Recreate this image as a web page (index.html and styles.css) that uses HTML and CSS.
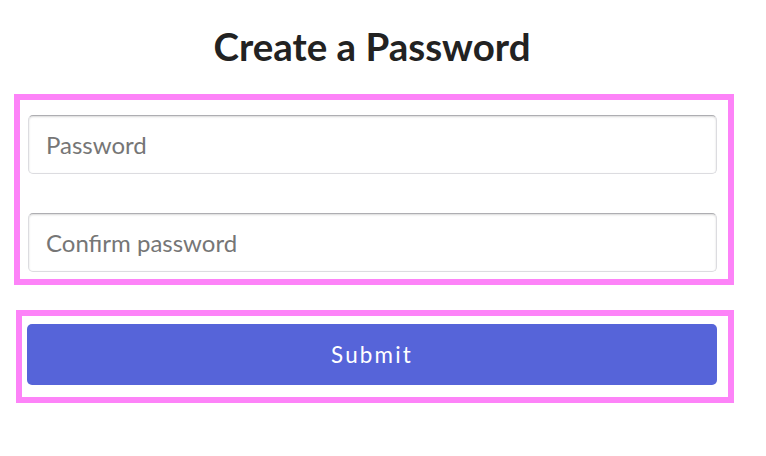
FILE: index.html
```html
<!DOCTYPE html>
<html lang="en">
<head>
<meta charset="utf-8">
<title>Create a Password</title>
<link rel="stylesheet" href="styles.css">
</head>
<body>
<div class="page">
  <h1 class="title">Create a Password</h1>
  <div class="fields">
    <input class="field" type="password" placeholder="Password">
    <input class="field" type="password" placeholder="Confirm password">
  </div>
  <div class="actions">
    <button class="submit" type="button">Submit</button>
  </div>
</div>
</body>
</html>
```

FILE: styles.css
```css
html, body {
  margin: 0;
  padding: 0;
  background: #fff;
  font-family: Lato, "Noto Sans", sans-serif;
}

.page {
  width: 720px;
  margin-left: 14px;
  padding-top: 23px;
}

.title {
  margin: 0 0 25px 0;
  padding-right: 4px;
  font-size: 38.5px;
  font-weight: 700;
  line-height: 1.2;
  color: #222;
  text-align: center;
}

.fields {
  display: flex;
  flex-direction: column;
  gap: 39px;
  border: 6px solid #fd83f8;
  padding: 15px 11px 7px 8px;
}

.field {
  box-sizing: border-box;
  height: 59px;
  width: 100%;
  margin: 0;
  padding: 0 17px;
  border: 1px solid #dcdce0;
  border-top-color: #aeaeb2;
  border-radius: 5px;
  box-shadow: inset 0 1px 2px rgba(0,0,0,0.15);
  font-family: Lato, "Noto Sans", sans-serif;
  font-size: 24px;
  color: #333;
  outline: none;
}

.field::placeholder {
  color: #767676;
}

.actions {
  margin-top: 25px;
  margin-left: 2px;
  border: 6px solid #fd83f8;
  padding: 8px 11px 12px 5px;
}

.submit {
  display: block;
  width: 100%;
  height: 61px;
  margin: 0;
  border: none;
  border-radius: 5px;
  background: #5664d9;
  color: #fff;
  font-family: Lato, "Noto Sans", sans-serif;
  font-size: 22.4px;
  letter-spacing: 2.2px;
  cursor: pointer;
}
```
